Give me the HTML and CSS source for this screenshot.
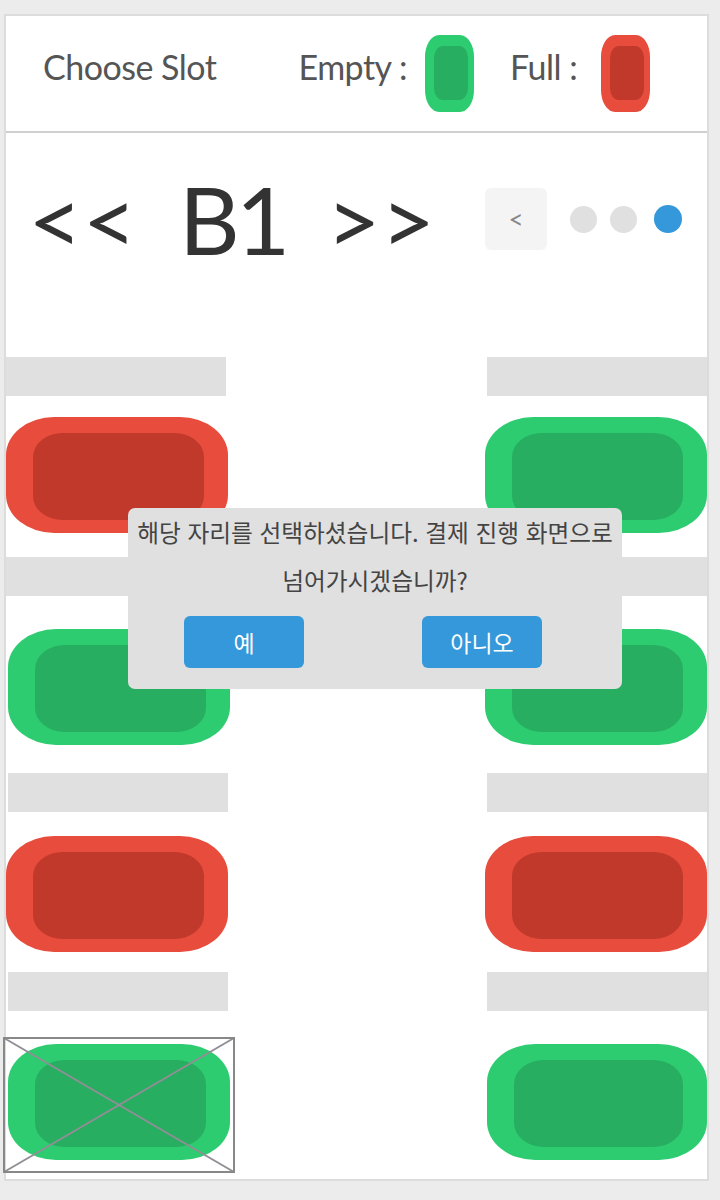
FILE: index.html
```html
<!DOCTYPE html>
<html lang="ko">
<head>
<meta charset="utf-8">
<title>Choose Slot</title>
<link rel="stylesheet" href="styles.css">
</head>
<body>
<div class="panel">
  <header class="top">
    <span class="title">Choose Slot</span>
    <span class="legend-label empty-label">Empty :</span>
    <span class="mini mini-green"><span class="mini-core"></span></span>
    <span class="legend-label full-label">Full :</span>
    <span class="mini mini-red"><span class="mini-core"></span></span>
  </header>

  <section class="level">
    <div class="floor">
      <span class="arrow">&lt;&lt;</span>
      <span class="floor-name">B1</span>
      <span class="arrow">&gt;&gt;</span>
    </div>
    <div class="pager">
      <button class="prev" type="button">&lt;</button>
      <span class="dot dot-1"></span>
      <span class="dot dot-2"></span>
      <span class="dot dot-3 active"></span>
    </div>
  </section>

  <section class="lot">
    <div class="row bars"><div class="bar"></div><div class="bar"></div></div>
    <div class="row cars m21">
      <div class="car full"><div class="core"></div></div>
      <div class="car empty"><div class="core"></div></div>
    </div>
    <div class="row bars m24"><div class="bar"></div><div class="bar"></div></div>
    <div class="row cars m33">
      <div class="car empty shift"><div class="core"></div></div>
      <div class="car empty"><div class="core"></div></div>
    </div>
    <div class="row bars m28"><div class="bar shift"></div><div class="bar"></div></div>
    <div class="row cars m24">
      <div class="car full"><div class="core"></div></div>
      <div class="car full"><div class="core"></div></div>
    </div>
    <div class="row bars m20"><div class="bar shift"></div><div class="bar"></div></div>
    <div class="row cars m33">
      <div class="car empty shift"><div class="core"></div></div>
      <div class="car empty narrow"><div class="core"></div></div>
    </div>
  </section>

  <div class="dialog">
    <p class="message">해당 자리를 선택하셨습니다. 결제 진행 화면으로<br>넘어가시겠습니까?</p>
    <div class="actions">
      <button class="btn" type="button">예</button>
      <button class="btn" type="button">아니오</button>
    </div>
  </div>

  <svg class="broken" width="232" height="136" viewBox="0 0 232 136" aria-hidden="true">
    <line x1="1" y1="1" x2="231" y2="135" stroke="#928e96" stroke-width="2"/>
    <line x1="231" y1="1" x2="1" y2="135" stroke="#928e96" stroke-width="2"/>
    <rect x="1" y="1" width="230" height="134" fill="none" stroke="#888" stroke-width="2"/>
  </svg>
</div>
</body>
</html>
```

FILE: styles.css
```css
* { box-sizing: border-box; }
html, body { margin: 0; padding: 0; }
body {
  width: 720px;
  height: 1200px;
  overflow: hidden;
  background: #ececec;
  font-family: Lato, "Noto Sans CJK KR", sans-serif;
}

.panel {
  position: relative;
  margin: 14px 0 0 4px;
  width: 705px;
  height: 1167px;
  background: #fff;
  border: 2px solid #dcdcdc;
}

/* header */
.top {
  display: flex;
  align-items: center;
  height: 117px;
  padding-left: 37px;
  border-bottom: 2px solid #cfcfcf;
  color: #555;
  font-size: 34px;
  letter-spacing: -0.5px;
}
.title, .legend-label { margin-bottom: 14px; }
.empty-label { margin-left: 82px; margin-right: 18px; }
.full-label { margin-left: 36px; margin-right: 24px; }

.mini {
  display: flex;
  width: 49px;
  height: 77px;
  padding: 11px 6px 12px 9px;
  border-radius: 14px / 22px;
}
.mini-core { flex: 1; border-radius: 9px / 12px; }
.mini-green { background: #2ecc71; }
.mini-green .mini-core { background: #27ae60; }
.mini-red { background: #e74c3c; }
.mini-red .mini-core { background: #c0392b; }

/* floor selector */
.level {
  display: flex;
  align-items: center;
  justify-content: space-between;
  height: 62px;
  margin-top: 55px;
  padding-left: 22px;
  padding-right: 25px;
}
.floor {
  display: flex;
  align-items: center;
  font-size: 94px;
  color: #333;
  margin-top: -2px;
}
.arrow { letter-spacing: 0; }
.floor-name { letter-spacing: -4px; margin-left: 42px; margin-right: 40px; }

.pager { display: flex; align-items: center; }
.prev {
  width: 62px;
  height: 62px;
  border: none;
  border-radius: 6px;
  background: #f4f4f4;
  color: #888;
  font-family: Lato, sans-serif;
  font-size: 26px;
  padding: 0;
}
.dot {
  width: 27px;
  height: 27px;
  border-radius: 50%;
  background: #e0e0e0;
}
.dot-1 { margin-left: 23px; }
.dot-2 { margin-left: 13px; }
.dot-3 { margin-left: 17px; width: 28px; height: 28px; }
.dot.active { background: #3498db; }

/* parking lot */
.lot { margin-top: 107px; }
.row { display: flex; justify-content: space-between; }
.m20 { margin-top: 20px; }
.m21 { margin-top: 21px; }
.m24 { margin-top: 24px; }
.m28 { margin-top: 28px; }
.m33 { margin-top: 33px; }

.bar {
  width: 220px;
  height: 39px;
  background: #e0e0e0;
}
.bar.shift { margin-left: 2px; }

.car {
  display: flex;
  width: 222px;
  height: 116px;
  padding: 16px 24px 13px 27px;
  border-radius: 48px / 38px;
}
.car.shift { margin-left: 2px; }
.car.narrow { width: 220px; }
.core { flex: 1; border-radius: 30px / 24px; }
.car.full { background: #e74c3c; }
.car.full .core { background: #c0392b; }
.car.empty { background: #2ecc71; }
.car.empty .core { background: #27ae60; }

/* confirm dialog */
.dialog {
  position: absolute;
  left: 122px;
  top: 492px;
  width: 494px;
  height: 181px;
  background: #e0e0e0;
  border-radius: 7px;
  text-align: center;
  font-family: "Noto Sans CJK KR", sans-serif;
}
.message {
  margin: 0;
  font-size: 23.7px;
  line-height: 48px;
  color: #444;
}
.actions {
  display: flex;
  gap: 118px;
  padding-left: 56px;
  margin-top: 12px;
}
.btn {
  width: 120px;
  height: 52px;
  border: none;
  border-radius: 6px;
  background: #3498db;
  color: #fff;
  font-family: "Noto Sans CJK KR", sans-serif;
  font-size: 23px;
  padding: 0;
}

/* broken image placeholder */
.broken {
  position: absolute;
  left: -3px;
  top: 1021px;
}
```
